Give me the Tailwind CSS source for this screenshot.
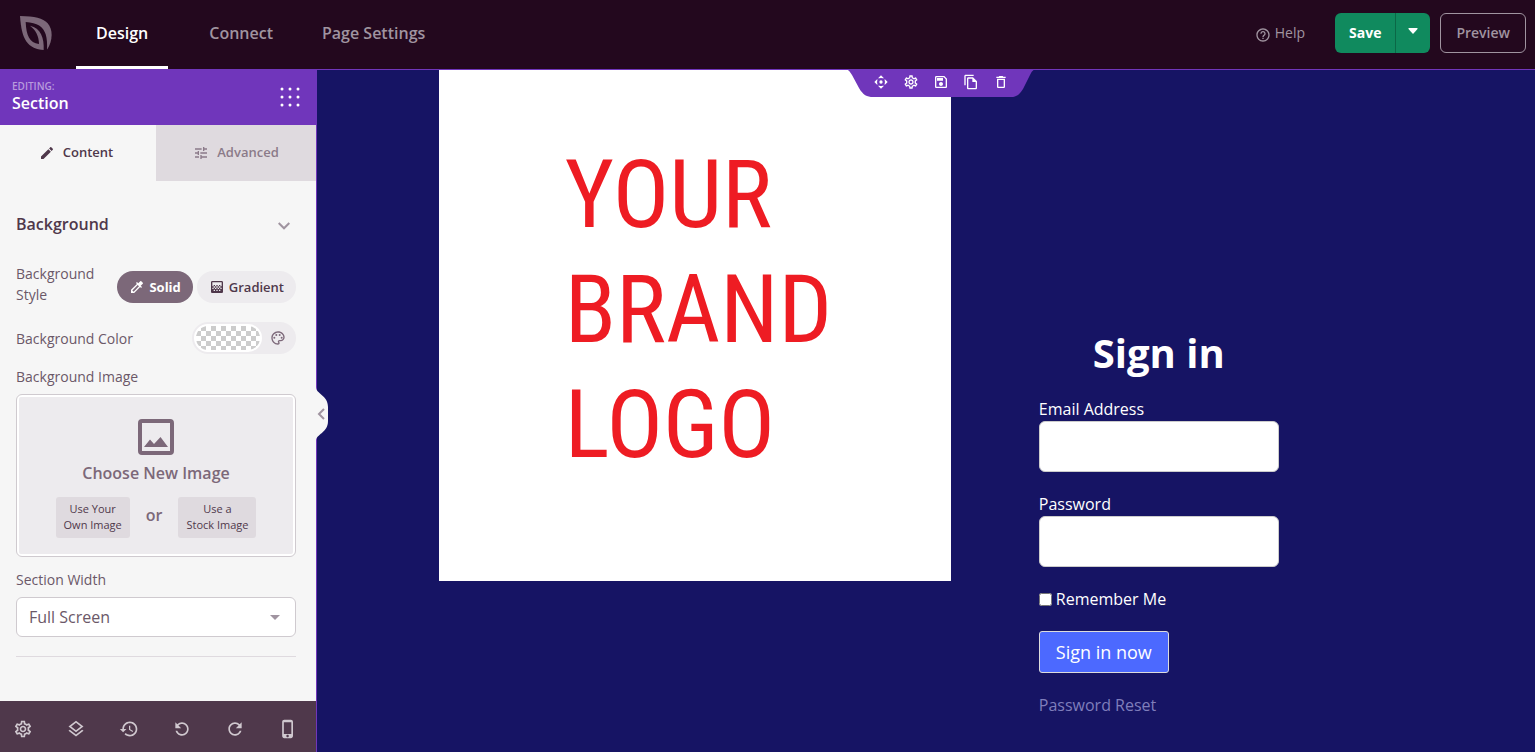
<!DOCTYPE html>
<html lang="en">
<head>
  <meta charset="UTF-8" />
  <meta name="viewport" content="width=device-width, initial-scale=1.0"/>
  <title>Page Builder</title>
  <script src="https://cdn.jsdelivr.net/npm/@tailwindcss/browser@4"></script>
</head>
<body class="h-screen flex flex-col overflow-hidden bg-[#161464] font-['Open_Sans','Noto_Sans',sans-serif]">

  <!-- Icon sprite -->
  <svg class="hidden" xmlns="http://www.w3.org/2000/svg">
    <symbol id="i-settings" viewBox="0 0 24 24"><path d="M19.43 12.98c.04-.32.07-.64.07-.98 0-.34-.03-.66-.07-.98l2.11-1.65c.19-.15.24-.42.12-.64l-2-3.46c-.09-.16-.26-.25-.44-.25-.06 0-.12.01-.17.03l-2.49 1c-.52-.4-1.08-.73-1.69-.98l-.38-2.65C14.46 2.18 14.25 2 14 2h-4c-.25 0-.46.18-.49.42l-.38 2.65c-.61.25-1.17.59-1.69.98l-2.49-1c-.06-.02-.12-.03-.18-.03-.17 0-.34.09-.43.25l-2 3.46c-.13.22-.07.49.12.64l2.11 1.65c-.04.32-.07.65-.07.98 0 .33.03.66.07.98l-2.11 1.65c-.19.15-.24.42-.12.64l2 3.46c.09.16.26.25.44.25.06 0 .12-.01.17-.03l2.49-1c.52.4 1.08.73 1.69.98l.38 2.65c.03.24.24.42.49.42h4c.25 0 .46-.18.49-.42l.38-2.65c.61-.25 1.17-.59 1.69-.98l2.49 1c.06.02.12.03.18.03.17 0 .34-.09.43-.25l2-3.46c.12-.22.07-.49-.12-.64l-2.11-1.65zm-1.98-1.71c.04.31.05.52.05.73 0 .21-.02.43-.05.73l-.14 1.13.89.7 1.08.84-.7 1.21-1.27-.51-1.04-.42-.9.68c-.43.32-.84.56-1.25.73l-1.06.43-.16 1.13-.2 1.35h-1.4l-.19-1.35-.16-1.13-1.06-.43c-.43-.18-.83-.41-1.23-.71l-.91-.7-1.06.43-1.27.51-.7-1.21 1.08-.84.89-.7-.14-1.13c-.03-.31-.05-.54-.05-.74s.02-.43.05-.73l.14-1.13-.89-.7-1.08-.84.7-1.21 1.27.51 1.04.42.9-.68c.43-.32.84-.56 1.25-.73l1.06-.43.16-1.13.2-1.35h1.39l.19 1.35.16 1.13 1.06.43c.43.18.83.41 1.23.71l.91.7 1.06-.43 1.27-.51.7 1.21-1.07.85-.89.7.14 1.13zM12 8c-2.21 0-4 1.79-4 4s1.79 4 4 4 4-1.79 4-4-1.79-4-4-4zm0 6c-1.1 0-2-.9-2-2s.9-2 2-2 2 .9 2 2-.9 2-2 2z"/></symbol>
    <symbol id="i-refresh" viewBox="0 0 24 24"><path d="M17.65 6.35C16.2 4.9 14.21 4 12 4c-4.42 0-7.99 3.58-7.99 8s3.57 8 7.99 8c3.73 0 6.84-2.55 7.73-6h-2.08c-.82 2.33-3.04 4-5.65 4-3.31 0-6-2.69-6-6s2.69-6 6-6c1.66 0 3.14.69 4.22 1.78L13 11h7V4l-2.35 2.35z"/></symbol>
  </svg>

  <!-- Top bar -->
  <header class="h-[69px] shrink-0 flex items-center bg-[#23081e] text-[#a094a0]">
    <a href="#" aria-label="Home" class="ml-5 mr-6 -mt-1">
      <svg class="w-8 h-[34px]" viewBox="0 0 96 102">
        <path fill="#7c6879" d="M0 0C45 1 68 6 83 22C99 40 99 72 82 100L72 102C22 98 5 72 0 0Z"/>
        <path fill="#23081e" d="M17 18C52 20 70 32 77 55C81 69 82 84 81 102H71C73 66 62 35 30 29C47 42 57 60 57 84C28 81 19 58 17 18Z"/>
      </svg>
    </a>
    <nav class="flex h-full text-base font-semibold">
      <a href="#" class="px-5 mr-[21px] flex items-center text-white border-b-3 border-white">Design</a>
      <a href="#" class="px-5 mr-[9px] flex items-center border-b-3 border-transparent">Connect</a>
      <a href="#" class="px-5 flex items-center border-b-3 border-transparent">Page Settings</a>
    </nav>
    <div class="ml-auto mr-[9px] flex items-center -mt-1">
      <a href="#" class="flex items-center gap-1 mr-[30px] text-sm">
        <svg class="size-4 mt-1" viewBox="0 0 24 24" fill="currentColor"><path d="M11 18h2v-2h-2v2zm1-16C6.48 2 2 6.48 2 12s4.48 10 10 10 10-4.48 10-10S17.52 2 12 2zm0 18c-4.41 0-8-3.59-8-8s3.59-8 8-8 8 3.59 8 8-3.59 8-8 8zm0-14c-2.21 0-4 1.79-4 4h2c0-1.1.9-2 2-2s2 .9 2 2c0 2-3 1.75-3 5h2c0-2.25 3-2.5 3-5 0-2.21-1.79-4-4-4z"/></svg>
        Help
      </a>
      <div class="flex h-10 mr-[10px] rounded-md overflow-hidden bg-[#108a5e] text-white">
        <button class="px-[14px] text-sm font-bold border-r border-[#0b6847]">Save</button>
        <button aria-label="More save options" class="w-[34px] flex items-center justify-center">
          <svg class="w-[10px] h-[6px] -mt-1" viewBox="0 0 10 6" fill="currentColor"><path d="M1 0h8q1 0 .5 1L5.5 5.6q-.5.5-1 0L.5 1Q0 0 1 0z"/></svg>
        </button>
      </div>
      <button class="h-10 px-[15px] rounded-md border border-[#a094a0] text-sm font-semibold">Preview</button>
    </div>
  </header>

  <div class="flex flex-1 min-h-0">
    <!-- Sidebar -->
    <aside class="w-79 shrink-0 flex flex-col bg-[#f6f6f6] text-[#4f384b]">
      <div class="h-14 shrink-0 flex items-center justify-between pl-3 pr-4 bg-[#7036bb] text-white">
        <div>
          <p class="text-[10px] leading-3 font-semibold text-[#b89bdd]">EDITING:</p>
          <h1 class="text-base leading-[22px] font-semibold">Section</h1>
        </div>
        <button aria-label="All blocks">
          <svg class="size-5" viewBox="0 0 20 20" fill="currentColor">
            <circle cx="2" cy="2" r="1.5"/><circle cx="10" cy="2" r="1.5"/><circle cx="18" cy="2" r="1.5"/>
            <circle cx="2" cy="10" r="1.5"/><circle cx="10" cy="10" r="1.5"/><circle cx="18" cy="10" r="1.5"/>
            <circle cx="2" cy="18" r="1.5"/><circle cx="10" cy="18" r="1.5"/><circle cx="18" cy="18" r="1.5"/>
          </svg>
        </button>
      </div>

      <div class="h-14 shrink-0 flex text-[13px] font-semibold">
        <button class="w-39 pr-1 flex items-center justify-center gap-2">
          <svg class="size-4" viewBox="0 0 24 24" fill="currentColor"><path d="M3 17.25V21h3.75L17.81 9.94l-3.75-3.75L3 17.25zM20.71 7.04c.39-.39.39-1.02 0-1.41l-2.34-2.34c-.39-.39-1.02-.39-1.41 0l-1.83 1.83 3.75 3.75 1.83-1.83z"/></svg>
          Content
        </button>
        <button class="flex-1 flex items-center justify-center gap-2 bg-[#dfdadf] text-[#8b7a89]">
          <svg class="size-4" viewBox="0 0 24 24" fill="currentColor"><path d="M3 17v2h6v-2H3zM3 5v2h10V5H3zm10 16v-2h8v-2h-8v-2h-2v6h2zM7 9v2H3v2h4v2h2V9H7zm14 4v-2H11v2h10zm-6-4h2V7h4V5h-4V3h-2v6z"/></svg>
          Advanced
        </button>
      </div>

      <div class="flex-1 min-h-0 overflow-hidden pl-4 pr-5 pt-8 text-sm leading-[21px] text-[#6b5868]">
        <button class="w-full flex items-center justify-between text-base leading-[22px] font-semibold text-[#4f384b]">
          Background
          <svg class="w-3 h-2 mt-1 mr-1.5" viewBox="0 0 12 8" fill="none" stroke="#a094a0" stroke-width="2"><path d="M.7 1L6 6.3 11.3 1"/></svg>
        </button>

        <div class="mt-7 flex items-center justify-between">
          <span class="w-24">Background Style</span>
          <div class="flex gap-1 pt-1.5 text-[13px]">
            <button class="h-8 px-3 flex items-center gap-1 rounded-full bg-[#7c6879] text-white font-bold">
              <svg class="size-4" viewBox="0 0 24 24" fill="currentColor"><path d="M20.71 5.63l-2.34-2.34c-.39-.39-1.02-.39-1.41 0l-3.12 3.12-1.93-1.91-1.41 1.41 1.42 1.42L3 16.25V21h4.75l8.92-8.92 1.42 1.42 1.41-1.41-1.92-1.92 3.12-3.12c.4-.4.4-1.03.01-1.42zM6.92 19L5 17.08l8.06-8.06 1.92 1.92L6.92 19z"/></svg>
              Solid
            </button>
            <button class="h-8 px-3 flex items-center gap-1 rounded-full bg-[#edebee] text-[#4f384b] font-semibold">
              <svg class="size-4" viewBox="0 0 24 24" fill="currentColor"><path d="M11 9h2v2h-2zm-2 2h2v2H9zm4 0h2v2h-2zm2-2h2v2h-2zM7 9h2v2H7zm12-6H5c-1.1 0-2 .9-2 2v14c0 1.1.9 2 2 2h14c1.1 0 2-.9 2-2V5c0-1.1-.9-2-2-2zM9 18H7v-2h2v2zm4 0h-2v-2h2v2zm4 0h-2v-2h2v2zm2-7h-2v2h2v2h-2v-2h-2v2h-2v-2h-2v2H9v-2H7v2H5v-2h2v-2H5V5h14v6z"/></svg>
              Gradient
            </button>
          </div>
        </div>

        <div class="mt-[17px] flex items-center justify-between">
          <span>Background Color</span>
          <div class="h-8 p-[2px] pr-[10px] flex items-center gap-2 rounded-full bg-[#edebee]">
            <button aria-label="Pick color" class="w-[68px] h-7 rounded-full border-2 border-white bg-[conic-gradient(#ccc_25%,#fff_0_50%,#ccc_0_75%,#fff_0)] bg-size-[10px_10px]"></button>
            <button aria-label="Palette">
              <svg class="size-4" viewBox="0 0 24 24" fill="#7c6879"><path d="M12 22C6.49 22 2 17.51 2 12S6.49 2 12 2s10 4.04 10 9c0 3.31-2.69 6-6 6h-1.77c-.28 0-.5.22-.5.5 0 .12.05.23.13.33.41.47.64 1.06.64 1.67 0 1.38-1.12 2.5-2.5 2.5zm0-18c-4.41 0-8 3.59-8 8s3.59 8 8 8c.28 0 .5-.22.5-.5 0-.16-.08-.28-.14-.35-.41-.46-.63-1.05-.63-1.65 0-1.38 1.12-2.5 2.5-2.5H16c2.21 0 4-1.79 4-4 0-3.86-3.59-7-8-7z"/><circle cx="6.5" cy="11.5" r="1.5"/><circle cx="9.5" cy="7.5" r="1.5"/><circle cx="14.5" cy="7.5" r="1.5"/><circle cx="17.5" cy="11.5" r="1.5"/></svg>
            </button>
          </div>
        </div>

        <p class="mt-3">Background Image</p>
        <div class="mt-[7px] p-[2px] rounded-md border border-[#cfcacf] bg-white">
          <div class="pt-[22px] pb-4 flex flex-col items-center rounded-xs bg-[#edebee] text-base font-semibold text-[#7c6879]">
            <svg class="size-9" viewBox="0 0 36 36"><rect x="2" y="2" width="32" height="32" rx="2" fill="none" stroke="currentColor" stroke-width="4"/><path fill="currentColor" d="M6 28L12 20.5 16 25 22.5 18 30 28z"/></svg>
            <p class="mt-1.5">Choose New Image</p>
            <div class="mt-3 flex items-center gap-4">
              <button class="h-[41px] px-2 pb-0.5 rounded-[3px] bg-[#dfdadf] text-[11px] leading-4 font-medium text-[#4f384b]">Use Your<br>Own Image</button>
              <span class="pb-1.5">or</span>
              <button class="h-[41px] px-2 pb-0.5 rounded-[3px] bg-[#dfdadf] text-[11px] leading-4 font-medium text-[#4f384b]">Use a<br>Stock Image</button>
            </div>
          </div>
        </div>

        <label for="section-width" class="mt-3 block">Section Width</label>
        <div class="mt-[7px] relative">
          <select id="section-width" class="w-full h-10 px-3 appearance-none rounded-md border border-[#cfcacf] bg-white text-base text-[#6b5868]">
            <option>Full Screen</option>
            <option>Fixed Width</option>
          </select>
          <svg class="absolute right-4 top-[18px] w-[10px] h-[5px] pointer-events-none" viewBox="0 0 10 5" fill="#a094a0"><path d="M0 0h10L5 5z"/></svg>
        </div>
        <hr class="mt-[19px] border-[#dfdadf]">
      </div>

      <!-- Bottom tools -->
      <div class="h-[51px] shrink-0 flex items-center justify-between pt-1 pl-[13px] pr-[18px] bg-[#4f384b] text-[#d0c8cf]">
        <button aria-label="Settings"><svg class="size-5" fill="currentColor"><use href="#i-settings"/></svg></button>
        <button aria-label="Layers"><svg class="size-5" viewBox="0 0 24 24" fill="currentColor"><path d="M11.99 18.54l-7.37-5.73L3 14.07l9 7 9-7-1.63-1.27-7.38 5.74zM12 16l7.36-5.73L21 9l-9-7-9 7 1.63 1.27L12 16zm0-11.47L17.74 9 12 13.47 6.26 9 12 4.53z"/></svg></button>
        <button aria-label="History"><svg class="size-5" viewBox="0 0 24 24" fill="currentColor"><path d="M13 3c-4.97 0-9 4.03-9 9H1l3.89 3.89.07.14L9 12H6c0-3.87 3.13-7 7-7s7 3.13 7 7-3.13 7-7 7c-1.93 0-3.68-.79-4.94-2.06l-1.42 1.42C8.27 19.99 10.51 21 13 21c4.97 0 9-4.03 9-9s-4.03-9-9-9zm-1 5v5l4.28 2.54.72-1.21-3.5-2.08V8H12z"/></svg></button>
        <button aria-label="Undo"><svg class="size-5 -scale-x-100" fill="currentColor"><use href="#i-refresh"/></svg></button>
        <button aria-label="Redo"><svg class="size-5" fill="currentColor"><use href="#i-refresh"/></svg></button>
        <button aria-label="Mobile preview"><svg class="size-5" viewBox="0 0 24 24" fill="currentColor"><path d="M15.5 1h-8C6.12 1 5 2.12 5 3.5v17C5 21.88 6.12 23 7.5 23h8c1.38 0 2.5-1.12 2.5-2.5v-17C18 2.12 16.88 1 15.5 1zm-4 21c-.83 0-1.5-.67-1.5-1.5s.67-1.5 1.5-1.5 1.5.67 1.5 1.5-.67 1.5-1.5 1.5zm4.5-4H7V4h9v14z"/></svg></button>
      </div>
    </aside>

    <!-- Canvas -->
    <main class="relative flex-1 min-w-0 border-l border-t border-[#7036bb] text-white">
      <button aria-label="Collapse sidebar" class="absolute -left-px top-[317px]">
        <svg class="w-3 h-[54px]" viewBox="0 0 12 54"><path fill="#f6f6f6" d="M0 0C0 7 12 8 12 20V34C12 46 0 47 0 54z"/><path fill="none" stroke="#a094a0" stroke-width="2" d="M8 22L3 27 8 32"/></svg>
      </button>

      <div class="absolute left-[43.4%] -top-px w-[190px] h-7">
        <svg class="absolute inset-0 w-full h-full" viewBox="0 0 190 28" fill="#7036bb"><path d="M0 0C3 1 4 3 6 6L13 19C17 26 21 28 27 28H165C171 28 174 25 177 20L184 6C186 2 187 1 190 0z"/></svg>
        <div class="relative h-full pb-[2px] flex items-center justify-center gap-3.5">
          <button aria-label="Move"><svg class="size-4" viewBox="0 0 24 24" fill="currentColor"><circle cx="12" cy="12" r="2.5"/><path d="M12 2l4.5 4.5h-2.2a6 6 0 0 0-4.6 0H7.5zM12 22l4.5-4.5h-2.2a6 6 0 0 1-4.6 0H7.5zM2 12l4.5-4.500v2.2a6 6 0 0 0 0 4.600v2.200zM22 12l-4.500-4.500v2.200a6 6 0 0 1 0 4.600v2.200z"/></svg></button>
          <button aria-label="Section settings"><svg class="size-4" fill="currentColor"><use href="#i-settings"/></svg></button>
          <button aria-label="Save section"><svg class="size-4" viewBox="0 0 24 24" fill="currentColor"><path d="M17 3H5c-1.11 0-2 .9-2 2v14c0 1.1.89 2 2 2h14c1.1 0 2-.9 2-2V7l-4-4zm2 16H5V5h11.17L19 7.83V19zm-7-7c-1.66 0-3 1.34-3 3s1.34 3 3 3 3-1.34 3-3-1.34-3-3-3zM6 6h9v4H6z"/></svg></button>
          <button aria-label="Duplicate section"><svg class="size-4" viewBox="0 0 24 24" fill="currentColor"><path d="M16 1H4c-1.1 0-2 .9-2 2v14h2V3h12V1zm-1 4H8c-1.1 0-1.99.9-1.99 2L6 21c0 1.1.89 2 1.99 2H19c1.1 0 2-.9 2-2V11l-6-6zM8 21V7h6v5h5v9H8z"/></svg></button>
          <button aria-label="Delete section"><svg class="size-4" viewBox="0 0 24 24" fill="currentColor"><path d="M6 19c0 1.1.9 2 2 2h8c1.1 0 2-.9 2-2V7H6v12zM8 9h8v10H8V9zm7.5-5l-1-1h-5l-1 1H5v2h14V4z"/></svg></button>
        </div>
      </div>

      <section class="pl-[10%] flex items-start gap-22">
        <div class="w-[512px] h-[511px] shrink-0 pl-[126px] pt-[68px] bg-white text-[#ee1c23] text-[94px] leading-[115px] font-['Liberation_Sans_Narrow','Roboto_Condensed','Open_Sans_Condensed',sans-serif]">
          YOUR<br>BRAND<br>LOGO
        </div>

        <form class="w-60 pt-[255px] flex flex-col items-start text-base leading-6">
          <h2 class="self-center mb-[17px] text-[40px] leading-[55px] font-bold">Sign in</h2>
          <label for="email">Email Address</label>
          <input id="email" type="email" class="w-full h-[51px] mb-5 px-3 rounded-md border border-[#ccc] bg-white text-black">
          <label for="password">Password</label>
          <input id="password" type="password" class="w-full h-[51px] mb-5 px-3 rounded-md border border-[#ccc] bg-white text-black">
          <label class="mb-5 flex items-center gap-1"><input type="checkbox" class="size-[13px]"> Remember Me</label>
          <button type="button" class="h-[42px] mb-5 px-4 rounded-[3px] border border-[#ddd] bg-[#4c69ff] text-lg">Sign in now</button>
          <a href="#" class="text-[#7f7ebb]">Password Reset</a>
        </form>
      </section>
    </main>
  </div>

</body>
</html>
